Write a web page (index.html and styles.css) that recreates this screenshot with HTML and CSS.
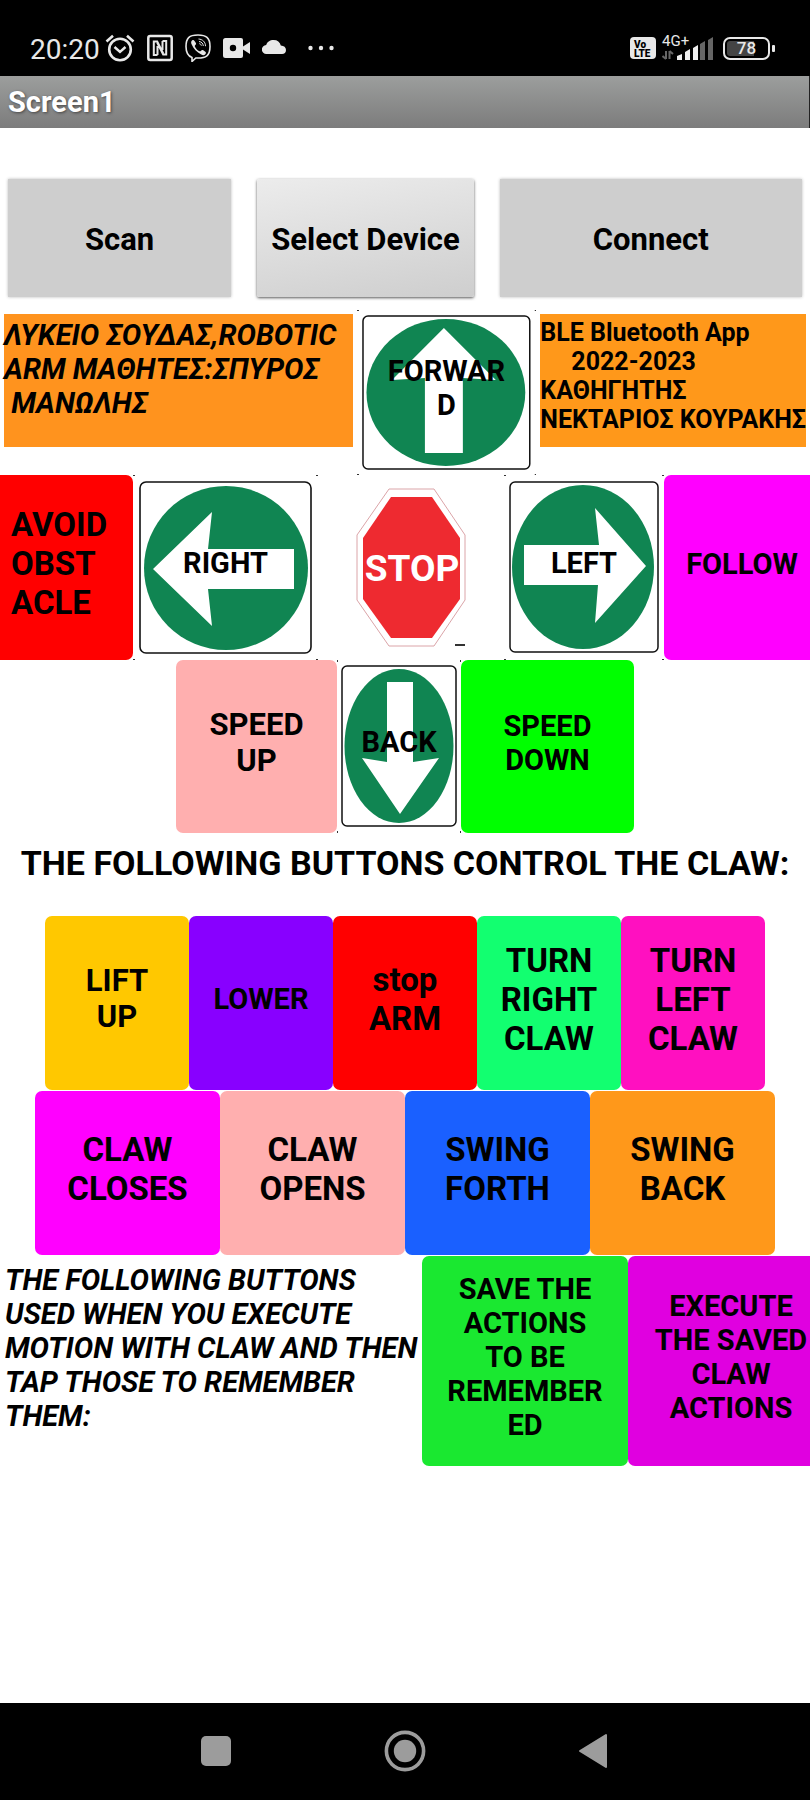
FILE: index.html
```html
<!DOCTYPE html>
<html lang="en">
<head>
<meta charset="utf-8">
<meta name="viewport" content="width=device-width, initial-scale=1">
<title>Screen1</title>
<link rel="stylesheet" href="styles.css">
</head>
<body>
<header class="status">
  <div class="status-left">
    <span class="clock">20:20</span>
    <svg width="30" height="28" viewBox="0 0 30 28" fill="none" stroke="#e8e8e8" aria-label="Alarm">
      <circle cx="15" cy="15.500" r="10.800" stroke-width="2.600"/>
      <path d="M9.500 13l5.500 5 5.500-5" stroke-width="2.400"/>
      <path d="M1.500 7.500L8 1.800M28.500 7.500L22 1.800" stroke-width="2.600"/>
    </svg>
    <svg width="26" height="28" viewBox="0 0 26 28" fill="none" stroke="#e8e8e8" stroke-width="2.500" aria-label="NFC">
      <rect x="1.300" y="2" width="23.400" height="24" rx="2"/>
      <path d="M10.500 21H6.800V7.500h3.400l6 12M10.500 21V12M15.500 7h3.700v13.500h-3l-6-12M15.500 7v9" stroke-width="2"/>
    </svg>
    <svg width="26" height="28" viewBox="0 0 26 28" fill="none" stroke="#e8e8e8" aria-label="Viber">
      <path d="M13 1C4 1 1 4 1 12.500c0 6.500 2 9.500 6 11V27.500l3.800-3.500c10.700.6 14.200-2.500 14.200-11.500S21 1 13 1z" stroke-width="1.600"/>
      <path d="M7 6.500c1-.8 1.800-.6 2.500.4l1.400 2.200c.4.9 0 1.600-.8 2.200-.5.5-.4 1 0 1.800.9 1.900 2.300 3.300 4.300 4.100.7.300 1.100.2 1.600-.4.700-.8 1.400-1 2.300-.5l2 1.400c.8.600.9 1.300.2 2.200-1.200 1.400-2.400 1.600-4.200.7-4.600-2.300-7.700-5.700-9.700-10.300-.7-1.600-.6-3 .4-3.800z" fill="#e8e8e8" stroke="none"/>
      <path d="M13.500 5c4 .2 7 3 7 7.200M14 7.500c2.500.2 4.200 2 4.300 4.500M14.300 9.700c1.200.1 1.900.8 2 2" stroke-width="1"/>
    </svg>
    <svg width="27" height="28" viewBox="0 0 27 28" fill="#e8e8e8" aria-label="Camera">
      <path fill-rule="evenodd" d="M2.500 4h15.500a2 2 0 0 1 2 2v16a2 2 0 0 1-2 2H2.500a2.500 2.500 0 0 1-2.500-2.500v-15A2.500 2.500 0 0 1 2.500 4zM10 10.800a3.200 3.200 0 1 0 0 6.400 3.200 3.200 0 0 0 0-6.400z"/>
      <path d="M20 12.500l7-4.500v12l-7-4.500z"/>
    </svg>
    <svg width="24" height="28" viewBox="0 0 24 28" fill="#e8e8e8" aria-label="Cloud">
      <path d="M4.500 20a4.500 4.500 0 0 1-.3-9C5 8 8 6 11.500 6c4 0 6.500 2 7.300 5.500C22 11.600 24 13.500 24 16s-1.500 4-4 4z"/>
    </svg>
    <svg class="more" width="26" height="28" viewBox="0 0 26 28" fill="#e8e8e8" aria-label="More">
      <circle cx="2.500" cy="14" r="2.200"/><circle cx="13" cy="14" r="2.200"/><circle cx="23.500" cy="14" r="2.200"/>
    </svg>
  </div>
  <div class="status-right">
    <span class="volte">Vo<br>LTE</span>
    <div class="signal">
      <span class="net">4G+</span>
      <svg width="51" height="28" viewBox="0 0 51 28" aria-hidden="true">
        <path d="M4 17v8M4 25l-3.500-3M7.500 25v-8M7.500 17l3.500 3" stroke="#666" stroke-width="2" fill="none"/>
        <path d="M15 26v-4l5-2v6zM23 26v-8l5-3v11zM31 26V14l5-3v15z" fill="#eee"/>
        <path d="M38 26V10l5-3v19zM46 26V6l5-3v23z" fill="#666"/>
      </svg>
    </div>
    <div class="battery"><span>78</span></div>
  </div>
</header>

<div class="titlebar"><h1>Screen1</h1></div>

<main>
  <div class="row connect">
    <button class="flat">Scan</button>
    <button class="raised">Select Device</button>
    <button class="flat">Connect</button>
  </div>

  <div class="row info">
    <p class="label credits">ΛΥΚΕΙΟ ΣΟΥΔΑΣ,ROBOTIC
ARM ΜΑΘΗΤΕΣ:ΣΠΥΡΟΣ
 ΜΑΝΩΛΗΣ</p>
    <button class="sign">
      <svg viewBox="0 0 180 165" preserveAspectRatio="none" aria-hidden="true">
        <path d="M0 0h2v1H0zM178 0h2v1h-2zM0 164h2v1H0zM178 164h2v1h-2z" fill="#333"/>
        <rect x="6" y="6" width="167" height="153" rx="5" fill="#fff" stroke="#111" stroke-width="1.500"/>
        <ellipse cx="89" cy="82.500" rx="79.500" ry="73.500" fill="#108552"/>
        <path d="M87 18L139 70l-33-2V143H68V68l-33 2z" fill="#fff"/>
      </svg>
      <span>FORWAR<br>D</span>
    </button>
    <p class="label school">BLE Bluetooth App
     2022-2023
ΚΑΘΗΓΗΤΗΣ
ΝΕΚΤΑΡΙΟΣ ΚΟΥΡΑΚΗΣ</p>
  </div>

  <div class="row drive">
    <button class="tile avoid big">AVOID<br>OBST<br>ACLE</button>
    <button class="sign">
      <svg viewBox="0 0 185 185" preserveAspectRatio="none" aria-hidden="true">
        <path d="M0 0h2v1H0zM183 0h2v1h-2zM0 184h2v1H0zM183 184h2v1h-2z" fill="#333"/>
        <rect x="7" y="7" width="171" height="171" rx="6" fill="#fff" stroke="#111" stroke-width="1.600"/>
        <circle cx="93" cy="93" r="82" fill="#108552"/>
        <path d="M20 94L79 37l-4 37h86v40H75l4 37z" fill="#fff"/>
      </svg>
      <span>RIGHT</span>
    </button>
    <button class="sign" aria-label="Stop">
      <svg viewBox="0 0 186 185" aria-hidden="true">
        <path d="M71 14h45l31 46v65l-31 46H71L39 125V60z" fill="#fff" stroke="#dba4a8"/>
        <path d="M73 22h41l28 41v61l-28 39H73l-28-39V63z" fill="#ee2a30"/>
        <text class="stop-word" x="94" y="106">STOP</text>
        <path d="M137 169h10v2h-10z" fill="#333"/>
      </svg>
    </button>
    <button class="sign">
      <svg viewBox="0 0 160 185" preserveAspectRatio="none" aria-hidden="true">
        <path d="M0 0h2v1H0zM158 0h2v1h-2zM0 184h2v1H0zM158 184h2v1h-2z" fill="#333"/>
        <rect x="6" y="7" width="148" height="170" rx="5" fill="#fff" stroke="#111" stroke-width="1.500"/>
        <ellipse cx="79" cy="92" rx="71" ry="82" fill="#108552"/>
        <path d="M142 91L91 33l4 37H20v40h74l-3 38z" fill="#fff"/>
      </svg>
      <span>LEFT</span>
    </button>
    <button class="tile follow">FOLLOW</button>
  </div>

  <div class="row speed">
    <button class="tile pink medium">SPEED<br>UP</button>
    <button class="sign">
      <svg viewBox="0 0 124 173" preserveAspectRatio="none" aria-hidden="true">
        <path d="M0 0h1v2H0zM123 0h1v2h-1zM0 171h1v2H0zM123 171h1v2h-1z" fill="#333"/>
        <rect x="5" y="6" width="114" height="160" rx="5" fill="#fff" stroke="#111" stroke-width="1.500"/>
        <ellipse cx="62" cy="86" rx="54.500" ry="77" fill="#108552"/>
        <path d="M63 154L25 98l25 4V22h26v80l26-4z" fill="#fff"/>
      </svg>
      <span>BACK</span>
    </button>
    <button class="tile lime">SPEED<br>DOWN</button>
  </div>

  <h2 class="claw-title">THE FOLLOWING BUTTONS CONTROL THE CLAW:</h2>

  <div class="row arm">
    <button class="tile yellow medium">LIFT<br>UP</button>
    <button class="tile violet">LOWER</button>
    <button class="tile red big">stop<br>ARM</button>
    <button class="tile mint big">TURN<br>RIGHT<br>CLAW</button>
    <button class="tile hotpink big">TURN<br>LEFT<br>CLAW</button>
  </div>

  <div class="row claw">
    <button class="tile magenta big">CLAW<br>CLOSES</button>
    <button class="tile pink big">CLAW<br>OPENS</button>
    <button class="tile blue big">SWING<br>FORTH</button>
    <button class="tile orange big">SWING<br>BACK</button>
  </div>

  <div class="row memory">
    <p class="label hint">THE FOLLOWING BUTTONS
USED WHEN YOU EXECUTE
MOTION WITH CLAW AND THEN
TAP THOSE TO REMEMBER
THEM:</p>
    <button class="tile green">SAVE THE<br>ACTIONS<br>TO BE<br>REMEMBER<br>ED</button>
    <button class="tile execute">EXECUTE<br>THE SAVED<br>CLAW<br>ACTIONS</button>
  </div>
</main>

<nav class="navbar">
  <button aria-label="Recent apps"><svg width="42" height="42" viewBox="0 0 42 42" fill="#9c9c9c"><rect x="6" y="6" width="30" height="30" rx="5"/></svg></button>
  <button aria-label="Home"><svg width="42" height="42" viewBox="0 0 42 42" fill="#9c9c9c"><circle cx="21" cy="21" r="11.200"/><circle cx="21" cy="21" r="18.600" fill="none" stroke="#9c9c9c" stroke-width="3.600"/></svg></button>
  <button aria-label="Back"><svg width="42" height="42" viewBox="0 0 42 42" fill="#9c9c9c" stroke="#9c9c9c" stroke-width="2" stroke-linejoin="round"><path d="M7 21L33 5v32z"/></svg></button>
</nav>
</body>
</html>
```
FILE: styles.css
```css
* {
  box-sizing: border-box;
}

body {
  margin: 0;
  min-height: 100vh;
  display: flex;
  flex-direction: column;
  background: #fff;
  color: #000;
  font-family: Roboto, "Noto Sans", sans-serif;
  overflow-x: hidden;
}

button {
  margin: 0;
  padding: 0;
  border: 0;
  background: none;
  color: #000;
  font: 700 29px/34px Roboto, "Noto Sans", sans-serif;
}

svg {
  display: block;
}

/* Status bar */
.status {
  display: flex;
  justify-content: space-between;
  align-items: center;
  height: 76px;
  padding: 20px 35px 0 30px;
  background: #000;
  color: #e8e8e8;
}

.status-left,
.status-right {
  display: flex;
  align-items: center;
}

.status-left {
  gap: 12px;
}

.status-left .more {
  margin-left: 10px;
}

.clock {
  margin-right: -7px;
  padding-top: 3px;
  font-size: 28px;
  line-height: 32px;
}

.volte {
  width: 26px;
  height: 22px;
  padding-top: 3px;
  border-radius: 4px;
  background: #e8e8e8;
  color: #000;
  font-size: 10px;
  font-weight: 900;
  line-height: 9px;
  text-align: left;
  padding-left: 4px;
}

.signal {
  display: grid;
  margin: 0 10px 0 6px;
}

.signal > * {
  grid-area: 1 / 1;
}

.net {
  font-size: 15px;
  line-height: 14px;
}

.battery {
  display: flex;
  align-items: center;
}

.battery span {
  width: 47px;
  height: 23px;
  border: 2px solid #e8e8e8;
  border-radius: 7px;
  background: linear-gradient(90deg, #444 70%, #000 70%) content-box;
  padding: 2px;
  font-size: 17px;
  font-weight: 500;
  line-height: 15px;
  text-align: center;
}

.battery::after {
  content: "";
  width: 3px;
  height: 7px;
  margin-left: 2px;
  border-radius: 1px;
  background: #e8e8e8;
}

/* Title bar */
.titlebar {
  padding: 9px 8px;
  border-right: 1px solid #222;
  background: linear-gradient(#9c9e9d, #7c7c7c);
}

.titlebar h1 {
  margin: 0;
  color: #fff;
  font-size: 29px;
  font-weight: 700;
  line-height: 34px;
  text-shadow: 1px 1px 3px #444;
}

/* App content */
main {
  flex: 1;
  padding-top: 51px;
}

.row {
  display: grid;
}

.connect {
  grid-template-columns: 223fr 216fr 302fr;
  gap: 26px;
  padding: 0 8px;
  min-height: 118px;
}

.flat,
.raised {
  padding-top: 3px;
  font-size: 31px;
}

.flat {
  background: #cecece;
  box-shadow: 0 0 3px #bbb;
}

.raised {
  border-radius: 2px;
  background: linear-gradient(170deg, #ececec, #cecece);
  box-shadow: 0 1px 3px #555;
}

.info {
  grid-template-columns: 353fr 180fr 265fr;
  gap: 4px;
  align-items: start;
  margin-top: 13px;
  padding-right: 4px;
}

.label {
  margin: 0;
  font-size: 29px;
  font-weight: 700;
  line-height: 34px;
  white-space: pre;
}

.credits,
.school {
  min-height: 133px;
  margin-top: 4px;
}

.credits {
  margin-left: 4px;
  padding-top: 4px;
  background: #ff931e;
  font-style: italic;
}

.school {
  padding-top: 4px;
  background: #ff981a;
  font-size: 25px;
  line-height: 29px;
}

.sign {
  display: grid;
  min-height: 165px;
}

.sign > * {
  grid-area: 1 / 1;
}

.sign svg {
  width: 100%;
  height: 100%;
}

.sign span {
  align-self: center;
  padding-bottom: 10px;
}

.stop-word {
  fill: #fff;
  font: 700 37px Roboto, sans-serif;
  text-anchor: middle;
}

.drive {
  grid-template-columns: 133fr 185fr 186fr 160fr 146fr;
  min-height: 185px;
}

.tile {
  padding-bottom: 8px;
  border-radius: 7px;
}

.medium {
  font-size: 31px;
  line-height: 36px;
}

.big {
  font-size: 33px;
  line-height: 39px;
}

.avoid {
  padding-left: 11px;
  border-radius: 0 7px 7px 0;
  background: #f00;
  text-align: left;
}

.follow {
  padding-left: 10px;
  border-radius: 7px 0 0 7px;
  background: #f0f;
}

.speed {
  grid-template-columns: 161fr 124fr 173fr;
  min-height: 173px;
  padding: 0 176px;
}

.claw-title {
  margin: 0;
  padding: 10px 0 33px;
  font-size: 34px;
  font-weight: 700;
  line-height: 40px;
  text-align: center;
  white-space: nowrap;
}

.arm {
  grid-template-columns: repeat(5, 1fr);
  min-height: 174px;
  padding: 0 45px;
}

.claw {
  grid-template-columns: repeat(4, 1fr);
  min-height: 164px;
  margin-top: 1px;
  padding: 0 35px;
}

.memory {
  grid-template-columns: 422fr 206fr 182fr;
  min-height: 210px;
  margin-top: 1px;
}

.hint {
  padding: 7px 0 0 5px;
  font-style: italic;
}

.pink { background: #ffafaf; }
.lime { background: #0f0; }
.yellow { background: #ffc800; }
.violet { background: #80f; }
.red { background: #f00; }
.mint { background: #12ff70; }
.hotpink { background: #ff10c0; }
.magenta { background: #f0f; }
.blue { background: #1a60ff; }
.orange { background: #ff981a; }
.green { background: #1ae830; }

.execute {
  padding-left: 24px;
  border-radius: 7px 0 0 7px;
  background: #e000e0;
}

/* System navigation */
.navbar {
  display: flex;
  justify-content: center;
  gap: 147px;
  padding: 27px 0 28px;
  background: #000;
}
```
